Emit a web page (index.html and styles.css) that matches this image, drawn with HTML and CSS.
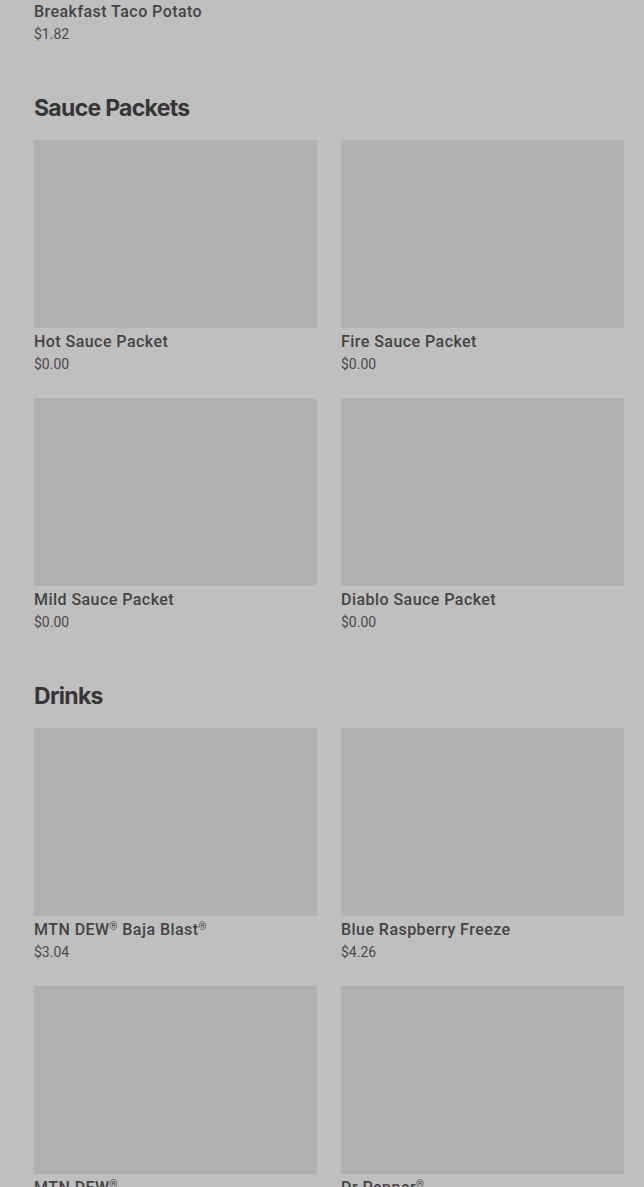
FILE: index.html
```html
<!DOCTYPE html>
<html lang="en">
<head>
    <meta charset="UTF-8">
    <meta name="viewport" content="width=device-width, initial-scale=1.0">
    <title>Menu</title>
    <link rel="stylesheet" href="styles.css">
</head>
<body>
    <div class="menu">
        <section class="section">
            <div class="grid">
                <div class="item">
                    <div class="thumb"></div>
                    <div class="name">Breakfast Taco Potato</div>
                    <div class="price">$1.82</div>
                </div>
            </div>
        </section>

        <section class="section">
            <h2 class="section-title">Sauce Packets</h2>
            <div class="grid">
                <div class="item">
                    <div class="thumb"></div>
                    <div class="name">Hot Sauce Packet</div>
                    <div class="price">$0.00</div>
                </div>
                <div class="item">
                    <div class="thumb"></div>
                    <div class="name">Fire Sauce Packet</div>
                    <div class="price">$0.00</div>
                </div>
                <div class="item">
                    <div class="thumb"></div>
                    <div class="name">Mild Sauce Packet</div>
                    <div class="price">$0.00</div>
                </div>
                <div class="item">
                    <div class="thumb"></div>
                    <div class="name">Diablo Sauce Packet</div>
                    <div class="price">$0.00</div>
                </div>
            </div>
        </section>

        <section class="section">
            <h2 class="section-title">Drinks</h2>
            <div class="grid">
                <div class="item">
                    <div class="thumb"></div>
                    <div class="name">MTN DEW<sup>®</sup> Baja Blast<sup>®</sup></div>
                    <div class="price">$3.04</div>
                </div>
                <div class="item">
                    <div class="thumb"></div>
                    <div class="name">Blue Raspberry Freeze</div>
                    <div class="price">$4.26</div>
                </div>
                <div class="item">
                    <div class="thumb"></div>
                    <div class="name">MTN DEW<sup>®</sup></div>
                    <div class="price">$3.04</div>
                </div>
                <div class="item">
                    <div class="thumb"></div>
                    <div class="name">Dr Pepper<sup>®</sup></div>
                    <div class="price">$3.04</div>
                </div>
            </div>
        </section>
    </div>
</body>
</html>
```

FILE: styles.css
```css
body {
    margin: 0;
    background-color: #bfbfbf;
    font-family: Roboto, "Liberation Sans", sans-serif;
    color: #404040;
    overflow: hidden;
}
.menu {
    /* page is scrolled: the first card's picture sits above the window */
    margin-top: -190px;
    padding: 0 20px 0 34px;
}
.section {
    margin-bottom: 48px;
}
.section-title {
    margin: 0 0 16px;
    font-family: Inter, Roboto, sans-serif;
    font-size: 23px;
    line-height: 32px;
    font-weight: 700;
    letter-spacing: -0.7px;
    color: #363636;
}
.grid {
    display: grid;
    grid-template-columns: 1fr 1fr;
    column-gap: 24px;
    row-gap: 24px;
}
.thumb {
    height: 188px;
    background-color: #b1b1b1;
    margin-bottom: 4px;
}
.name {
    font-size: 16px;
    line-height: 20px;
    font-weight: 500;
    letter-spacing: 0.45px;
    margin-bottom: 2px;
    color: #444;
}
.name sup {
    font-size: 10px;
    line-height: 0;
    vertical-align: 5px;
}
.price {
    font-size: 14px;
    line-height: 20px;
    color: #4a4a4a;
}
```
